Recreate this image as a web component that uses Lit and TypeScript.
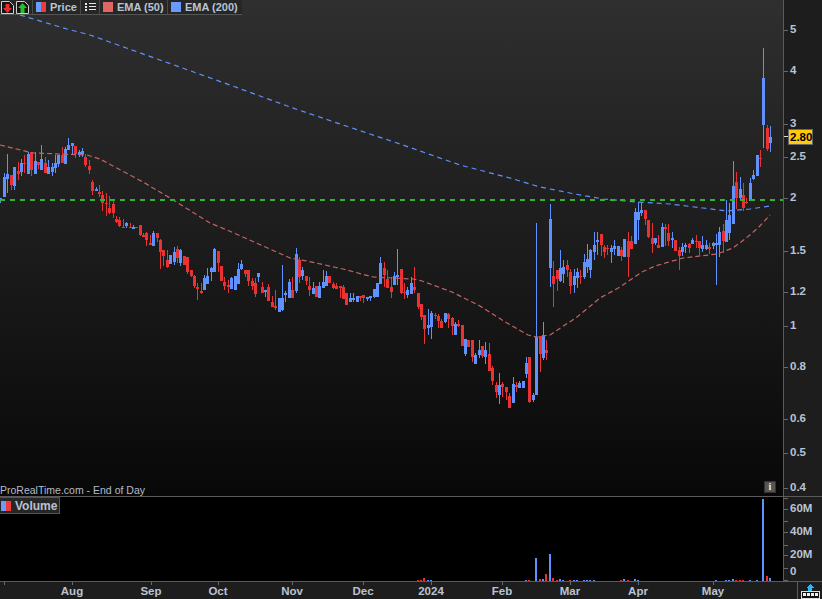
import { LitElement, html, svg, css } from "lit";
import { customElement } from "lit/decorators.js";

type Candle = { x: number; top: number; bot: number; hi: number; lo: number; t: string };

// each row: type, x, body top, body bottom, high, low - in 3x crop coordinates of a given origin
function parse(ox: number, oy: number, src: string): Candle[] {
  return src
    .trim()
    .split(/\n|;/)
    .map((l) => l.trim())
    .filter(Boolean)
    .map((l) => {
      const [t, x, top, bot, hi, lo] = l.split(/\s+/);
      return {
        t,
        x: Math.floor(ox + +x / 3),
        top: Math.round(oy + +top / 3),
        bot: Math.round(oy + +bot / 3),
        hi: Math.round(oy + +hi / 3),
        lo: Math.round(oy + +lo / 3),
      };
    });
}

const CANDLES: Candle[] = [
  ...parse(0, 130, `
B 1 205 213 205 220;b 13 142 197 128 197;b 22 132 143 72 188;r 34 135 165 135 180;b 43 112 166 112 180
r 55 123 131 95 150;b 64 100 122 88 138;r 73 98 100 75 128;b 85 72 128 65 128;r 94 65 120 65 137
b 106 94 128 65 128;r 115 95 105 95 118;b 124 88 116 45 118;r 136 100 128 80 128;b 145 112 128 90 128
b 157 110 122 100 137;b 166 100 112 75 128;b 175 75 98 75 112;r 187 75 100 50 100;b 196 57 98 50 98
b 205 45 57 25 57;b 217 40 45 40 75;r 226 48 73 48 83;b 238 65 72 60 82;b 247 63 70 55 80
r 256 82 105 72 110;r 268 108 120 90 132;r 277 155 183 150 195;B 289 177 183 170 183;r 298 185 191 165 200
r 307 195 218 183 243;r 319 219 223 190 258;R 328 235 245 198 252;r 340 222 250 210 264;r 349 266 275 258 278
r 358 270 288 262 292;r 370 291 293 267 293;b 379 279 285 275 293;r 391 291 293 280 293;b 400 290 293 285 293
r 409 291 293 291 293;r 421 285 315 285 319;r 430 315 320 310 322;r 439 310 330 305 347;r 451 339 344 315 345
b 460 310 344 304 348;r 472 310 324 310 335;r 481 330 365 326 417;r 490 360 378 360 408;r 502 390 410 360 414
B 511 376 402 376 402;b 523 367 392 350 405;r 532 358 385 348 398;b 541 360 395 358 408;r 553 379 405 379 405
r 562 381 425 381 432;r 574 421 437 421 440;r 583 438 468 434 473;r 592 472 477 460 510;r 604 484 489 460 492
b 613 445 477 436 480;b 622 438 458 415 458`),
  ...parse(200, 230, `
b 34 113 122 110 152;b 43 57 122 53 122;r 55 63 98 63 125;r 64 108 152 108 152;r 73 155 168 140 180
r 85 166 172 150 188;b 94 145 175 140 175;b 106 138 178 138 178;b 115 118 158 100 158;b 124 102 113 90 120
R 136 121 128 121 140;r 145 121 152 121 168;R 157 152 165 145 180;R 166 158 190 145 200;B 175 130 142 130 155
r 187 172 190 155 190;b 196 181 182 181 200;r 205 172 212 163 212;R 217 217 227 198 232;r 226 229 234 180 240
b 238 205 242 205 242;b 247 203 238 105 242;b 256 190 193 183 215;b 268 157 200 147 200;R 277 180 200 140 200
b 289 73 180 55 190;r 298 90 140 80 158;B 307 120 138 110 150;r 319 138 152 138 165;r 328 168 180 140 197
b 340 175 190 155 190;r 349 168 200 168 202;b 358 167 200 155 200;b 370 157 172 120 172;b 379 138 165 122 165
r 388 138 158 138 158;R 400 162 172 155 178;R 409 168 175 160 175;r 421 169 175 169 205;R 430 172 205 165 205
r 439 190 225 190 225;b 451 205 212 190 215;b 460 203 205 190 215;b 472 197 212 197 212;r 481 199 203 199 212
r 490 195 205 195 218;b 502 200 202 200 213;b 511 198 200 198 213;b 523 178 198 178 205;b 532 160 197 160 197
b 541 98 158 82 158;r 553 115 135 96 170;r 562 148 173 120 173;r 574 172 185 140 203;b 583 137 163 125 163
b 592 135 136 57 165;r 604 118 190 118 192;r 613 186 190 160 207;b 622 181 192 170 205;b 634 160 188 140 188
R 643 170 178 112 190`),
  ...parse(410, 200, `
r 25 280 320 280 328;r 34 313 350 313 360;r 43 345 387 345 432;b 55 375 382 328 405;b 64 340 377 334 417
r 76 346 349 340 358;r 85 348 362 342 385;R 94 363 380 358 380;b 106 340 362 340 368;r 115 342 357 340 385
r 127 355 377 350 405;b 136 373 403 365 403;r 145 373 378 360 380;r 157 376 438 376 438;b 166 418 458 418 468
R 175 420 438 420 440;r 187 420 472 420 486;b 196 466 488 458 492;b 208 450 461 420 475;r 217 438 467 438 474
b 226 450 467 425 492;r 238 462 513 428 513;r 247 505 543 498 555;r 259 555 576 545 594;b 268 556 581 520 612
r 277 552 561 545 590;r 289 561 576 561 600;R 298 589 620 578 620;b 310 553 605 532 605;r 319 555 560 545 575
b 328 550 561 542 565;b 340 544 561 544 565;b 349 490 518 472 533;r 358 472 606 472 608;b 370 586 596 580 606
b 379 410 582 70 585;r 391 408 462 408 515;b 400 406 470 366 480;r 409 450 458 420 480;B 421 57 204 12 260
R 430 229 248 183 320;r 442 210 236 210 272;b 451 205 240 150 245;b 460 202 220 180 250;r 472 195 210 180 232
r 481 217 257 208 282;b 493 228 253 207 280;b 502 217 231 205 265`),
  ...parse(570, 180, `
r 31 287 289 270 312;b 43 247 287 223 298;b 52 237 257 192 278;b 61 210 266 208 295;b 73 196 212 157 240
b 82 181 182 157 225;r 94 163 195 163 228;R 103 202 212 195 233;r 112 205 208 195 225;b 124 203 212 195 248
b 133 198 205 180 225;b 145 198 226 198 226;r 154 210 228 200 243;b 163 178 227 178 228;r 175 182 232 155 290
R 184 184 203 168 203;b 196 97 190 85 192;b 205 97 118 65 180;b 214 90 96 65 108;r 226 90 116 90 135
r 235 120 170 120 175;r 247 175 191 130 218;B 256 175 190 175 195;r 265 195 203 165 203;b 277 142 197 128 197
r 286 142 146 133 197;r 295 160 182 133 197;b 307 175 178 155 205;r 316 180 213 180 213;r 328 210 228 200 270
b 337 202 212 190 228;b 346 195 197 190 220;r 358 192 204 190 220;b 367 180 190 175 190;r 379 182 184 165 205
r 388 184 204 184 225;b 397 195 204 168 215;b 409 196 204 180 210;r 418 202 206 190 222;B 430 188 198 185 208
B 439 188 195 162 315;b 448 155 193 140 230;r 460 152 183 133 220;b 469 120 182 60 182;b 478 105 156 70 180`),
  ...parse(690, 30, `
b 130 468 578 393 580;r 139 456 505 427 537;b 151 478 500 440 510;R 160 496 532 460 543;r 169 515 517 505 522
b 181 460 510 445 510;b 190 436 445 420 450;b 202 376 434 376 434;r 211 385 386 360 410;B 220 144 285 55 355
r 232 294 358 285 362;b 241 322 337 288 365`),
];

const EMA50 =
  "0,145 33,153 87,155 100,159 143,182 170,198 210,223 227,230 290,258 307,261 343,269 373,277 413,279 422,281 452,292 480,306 507,323 528,335 537,337 550,335 577,317 600,298 620,287 642,272 655,266 683,258 717,254 733,248 745,239 758,228 770,215";
const EMA200 =
  "20,15 67,29 90,35 160,60 230,85 290,107 340,124 400,144 460,165 510,178 540,187 575,194 603,199 637,202 670,204 703,208 727,211 750,209 770,206";

// x, top y, colour
const VOL: [number, number, string][] = [
  [417, 580, "r"], [420, 580, "r"], [423, 578, "r"], [427, 580, "b"], [430, 580, "b"],
  [525, 580, "b"], [528, 580, "r"], [535, 558, "b"], [539, 579, "r"], [542, 579, "b"],
  [545, 574, "r"], [549, 554, "b"], [552, 578, "r"], [556, 580, "r"], [559, 579, "b"],
  [562, 580, "b"], [569, 580, "r"], [573, 580, "b"], [576, 580, "b"], [583, 580, "b"],
  [586, 580, "b"], [589, 580, "b"], [593, 580, "b"],
  [620, 580, "r"], [623, 579, "b"], [627, 580, "r"], [634, 579, "b"], [637, 580, "b"],
  [715, 580, "b"], [725, 580, "b"], [728, 580, "b"], [732, 579, "b"], [735, 580, "r"],
  [739, 580, "r"], [742, 580, "r"], [749, 580, "b"], [756, 580, "b"],
  [762, 499, "b"], [766, 576, "r"], [769, 578, "b"],
];

const PRICE_LABELS: [string, number][] = [
  ["5", 30], ["4", 71], ["3", 124], ["2.5", 157], ["2", 198], ["1.5", 251],
  ["1.2", 292], ["1", 326], ["0.8", 367], ["0.6", 419], ["0.5", 453], ["0.4", 488],
];
const VOL_LABELS: [string, number][] = [["60M", 509], ["40M", 532], ["20M", 555], ["0", 572]];
const VOL_TICKS = [498, 509, 521, 532, 545, 555, 568, 580];
const MONTHS: [string, number][] = [
  ["Aug", 72], ["Sep", 151], ["Oct", 218], ["Nov", 292], ["Dec", 363],
  ["2024", 431], ["Feb", 502], ["Mar", 570], ["Apr", 638], ["May", 713],
];

function candle(c: Candle) {
  const blue = c.t === "b" || c.t === "B";
  const filled = c.t === "r" || c.t === "B";
  const cls = blue ? "blue" : "red";
  const h = Math.max(c.bot - c.top, 1);
  return svg`
    <rect class=${cls} x=${c.x} y=${c.hi} width="1" height=${Math.max(c.lo - c.hi, 1)}></rect>
    ${filled
      ? svg`<rect class=${cls} x=${c.x - 1} y=${c.top} width="3" height=${h}></rect>`
      : svg`<rect class=${"hollow " + cls + "-s"} x=${c.x - 1 + 0.5} y=${c.top + 0.5} width="2" height=${h}></rect>`}
  `;
}

@customElement("app-root")
export class AppRoot extends LitElement {
  static styles = css`
    :host {
      display: block;
      width: 822px;
      height: 599px;
      position: relative;
      overflow: hidden;
      background: #1d1d1d;
      font-family: "Liberation Sans", Arial, sans-serif;
      color: #b8c3d4;
    }
    .stage { display: block; width: 822px; height: 599px; }
    .crisp { shape-rendering: crispEdges; }
    .red { fill: #ea3232; }
    .blue { fill: #5f92ff; }
    .hollow { fill: none; stroke-width: 1; }
    .red-s { stroke: #ea3232; }
    .blue-s { stroke: #5f92ff; }
    .ema50 { fill: none; stroke: #c46464; stroke-width: 1.2; stroke-dasharray: 5 3; }
    .ema200 { fill: none; stroke: #5f92ff; stroke-width: 1.2; stroke-dasharray: 5 4; }
    .level { stroke: #2fb52f; stroke-width: 2; stroke-dasharray: 5 5; }
    .rule { stroke: #5a5a5a; stroke-width: 1; }
    .tick { stroke: #6a6a6a; stroke-width: 1; }
    .label { font: bold 11.5px "Liberation Sans", Arial, sans-serif; fill: #b8c3d4; }
    .credit { font: 11px "Liberation Sans", Arial, sans-serif; fill: #b4bcc8; }
    .tagtext { font: bold 11.5px "Liberation Sans", Arial, sans-serif; fill: #000; }

    .toolbar {
      position: absolute;
      left: 0;
      top: 0;
      height: 14px;
      display: flex;
      align-items: center;
      background: #262626;
      border-bottom: 1px solid #555;
      font-size: 11px;
      font-weight: bold;
      line-height: 14px;
    }
    .cell {
      display: flex;
      align-items: center;
      gap: 4px;
      height: 14px;
      padding: 0 3px;
      border-right: 1px solid #484848;
      box-sizing: border-box;
    }
    .icons { gap: 2px; padding: 0 1px; width: 33px; }
    .list { width: 19px; justify-content: center; padding: 0; }
    .plain { border-right: none; }
    .swatch { width: 10px; height: 10px; flex: none; }
    .split { background: linear-gradient(90deg, #6a9bff 50%, #ee3b3b 50%); }
    .s50 { background: #e06666; }
    .s200 { background: #6a9bff; }
    .vol {
      position: absolute;
      left: -1px;
      top: 497px;
      height: 17px;
      width: 61px;
      box-sizing: border-box;
      display: flex;
      align-items: center;
      gap: 4px;
      padding-left: 1px;
      background: #262626;
      border: 1px solid #555;
      font-size: 12px;
      font-weight: bold;
    }
    svg.icon { display: block; flex: none; }
    .info {
      position: absolute;
      left: 764px;
      top: 481px;
      width: 10px;
      height: 10px;
      background: #555;
      border: 1px solid #333;
      color: #eee;
      font: bold 10px/10px "Liberation Serif", serif;
      text-align: center;
    }
  `;

  render() {
    return html`
      <svg class="stage" viewBox="0 0 822 599" xmlns="http://www.w3.org/2000/svg">
        <defs>
          <linearGradient id="bg" x1="0" y1="0" x2="0" y2="1">
            <stop offset="0" stop-color="#2f2f2f"></stop>
            <stop offset="1" stop-color="#080808"></stop>
          </linearGradient>
        </defs>
        <rect x="0" y="0" width="783" height="496" fill="url(#bg)"></rect>
        <rect x="0" y="497" width="783" height="84" fill="#000"></rect>

        <g class="crisp">${CANDLES.map(candle)}</g>
        <polyline class="ema50" points=${EMA50}></polyline>
        <polyline class="ema200" points=${EMA200}></polyline>
        <line class="level crisp" x1="0" y1="200" x2="783" y2="200"></line>

        <g class="crisp">
          ${VOL.map(([x, y, c]) => svg`<rect class=${c === "r" ? "red" : "blue"} x=${x} y=${y} width="2" height=${581 - y}></rect>`)}
          <line class="rule" x1="0" y1="496.5" x2="822" y2="496.5"></line>
          <line class="rule" x1="0" y1="581.5" x2="797" y2="581.5"></line>
          <line class="rule" x1="783.5" y1="0" x2="783.5" y2="582"></line>
          ${PRICE_LABELS.map(([, y]) => svg`<line class="tick" x1="784" y1=${y + 0.5} x2="788" y2=${y + 0.5}></line>`)}
          ${VOL_TICKS.map((y) => svg`<line class="tick" x1="784" y1=${y + 0.5} x2="788" y2=${y + 0.5}></line>`)}
          ${[4, ...MONTHS.map((m) => m[1])].map((x) => svg`<line class="tick" x1=${x + 0.5} y1="582" x2=${x + 0.5} y2="585"></line>`)}
          <line x1="784" y1="136.5" x2="788" y2="136.5" stroke="#ddd"></line>
          <rect x="788.5" y="129.5" width="24" height="15" fill="#ffc90e" stroke="#666"></rect>
          <line class="rule" x1="797.5" y1="582" x2="797.5" y2="599"></line>
          <line class="rule" x1="797" y1="581.5" x2="822" y2="581.5"></line>
        </g>

        ${PRICE_LABELS.map(([t, y]) => svg`<text class="label" x="790" y=${y + 3}>${t}</text>`)}
        ${VOL_LABELS.map(([t, y]) => svg`<text class="label" x="790" y=${y + 3}>${t}</text>`)}
        ${MONTHS.map(([t, x]) => svg`<text class="label" x=${x} y="595" text-anchor="middle">${t}</text>`)}
        <text class="tagtext" x="790" y="141">2.80</text>
        <text class="credit" x="0" y="494" textLength="145" lengthAdjust="spacingAndGlyphs">ProRealTime.com - End of Day</text>

        <g class="crisp">
          <path d="M810 584 L814 588 L812 588 L812 591 L808 591 L808 588 L806 588 Z" fill="#2fb6f5"></path>
          <rect x="801.5" y="591.5" width="18" height="6.5" fill="#111" stroke="#ddd"></rect>
          ${[803, 807, 811, 815].map((x) => svg`<rect x=${x} y="593" width="3" height="3" fill="#eee"></rect>`)}
        </g>
      </svg>

      <div class="toolbar">
        <div class="cell icons">
          ${this.doc("#ee2b2b", true)}${this.doc("#22c02a", false)}
        </div>
        <div class="cell" style="width:48px"><span class="swatch split"></span>Price</div>
        <div class="cell list">
          <svg class="icon crisp" width="11" height="10" viewBox="0 0 11 10">
            <path d="M0 1h2v2H0zM4 1h7v1H4zM0 4h2v2H0zM4 4h7v1H4zM0 7h2v2H0zM4 7h7v1H4z" fill="#e6e6e6"></path>
          </svg>
        </div>
        <div class="cell" style="width:68px"><span class="swatch s50"></span>EMA (50)</div>
        <div class="cell plain" style="width:74px"><span class="swatch s200"></span>EMA (200)</div>
      </div>

      <div class="vol"><span class="swatch split"></span>Volume</div>
      <div class="info">i</div>
    `;
  }

  private doc(color: string, down: boolean) {
    const arrow = down
      ? "M4.5 3h4v4H11L6.5 12 2 7h2.5z"
      : "M6.5 2 11 7H8.5v5h-4V7H2z";
    return html`<svg class="icon" width="13" height="13" viewBox="0 0 13 13">
      <path d="M.5.5h8l4 4v8H.5z" fill="#161616" stroke="#cfcfcf"></path>
      <path d="${arrow}" fill="${color}"></path>
    </svg>`;
  }
}
